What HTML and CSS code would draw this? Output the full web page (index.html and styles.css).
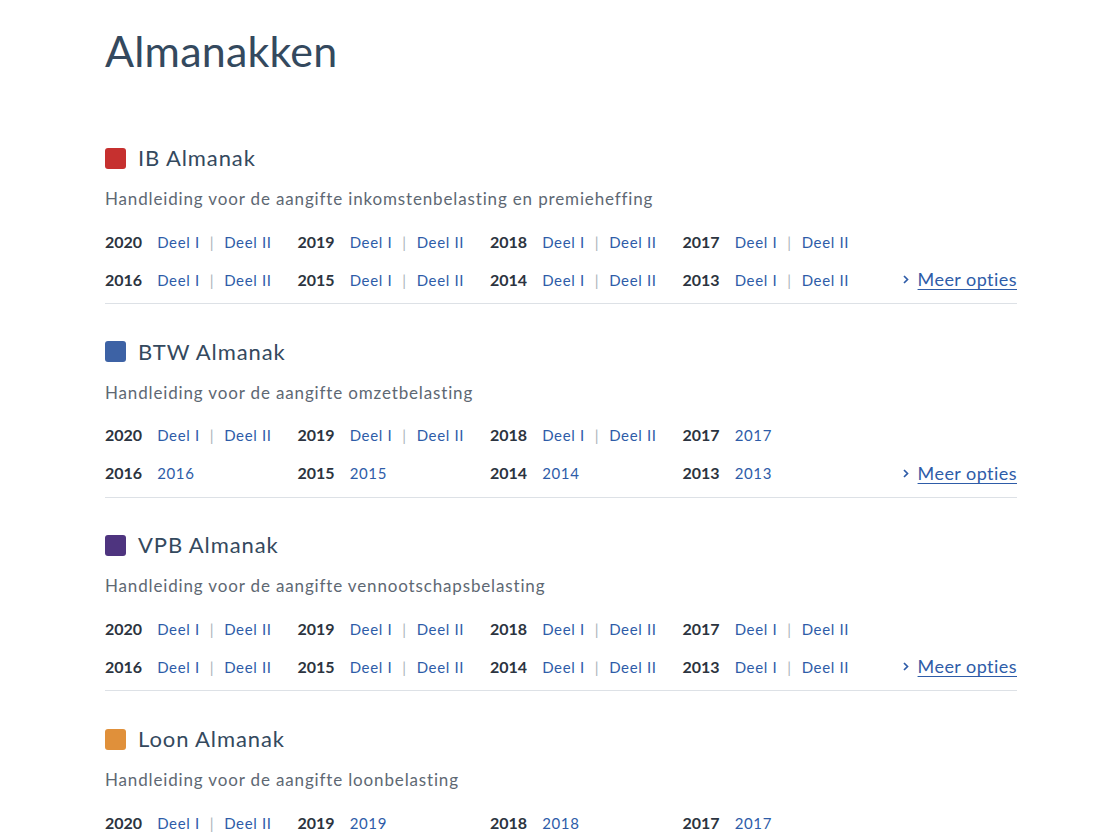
FILE: index.html
```html
<!DOCTYPE html>
<html lang="nl">
<head>
<meta charset="utf-8">
<title>Almanakken</title>
<link rel="stylesheet" href="styles.css">
</head>
<body>
<main class="page">
  <h1 class="page-title">Almanakken</h1>

  <section class="almanak">
    <h2 class="almanak-title"><span class="swatch swatch-red"></span>IB Almanak</h2>
    <p class="almanak-desc">Handleiding voor de aangifte inkomstenbelasting en premieheffing</p>
    <div class="years">
      <div class="year"><span class="y">2020</span><a href="#">Deel I</a><span class="sep">|</span><a href="#">Deel II</a></div>
      <div class="year"><span class="y">2019</span><a href="#">Deel I</a><span class="sep">|</span><a href="#">Deel II</a></div>
      <div class="year"><span class="y">2018</span><a href="#">Deel I</a><span class="sep">|</span><a href="#">Deel II</a></div>
      <div class="year"><span class="y">2017</span><a href="#">Deel I</a><span class="sep">|</span><a href="#">Deel II</a></div>
      <div class="more-cell"></div>
      <div class="year"><span class="y">2016</span><a href="#">Deel I</a><span class="sep">|</span><a href="#">Deel II</a></div>
      <div class="year"><span class="y">2015</span><a href="#">Deel I</a><span class="sep">|</span><a href="#">Deel II</a></div>
      <div class="year"><span class="y">2014</span><a href="#">Deel I</a><span class="sep">|</span><a href="#">Deel II</a></div>
      <div class="year"><span class="y">2013</span><a href="#">Deel I</a><span class="sep">|</span><a href="#">Deel II</a></div>
      <div class="more-cell"><a class="more" href="#"><svg class="chev" width="6" height="9" viewBox="0 0 6 9"><path d="M1 1 L4.5 4.5 L1 8" fill="none" stroke="currentColor" stroke-width="1.7"/></svg><span class="more-text">Meer opties</span></a></div>
    </div>
  </section>

  <section class="almanak">
    <h2 class="almanak-title"><span class="swatch swatch-blue"></span>BTW Almanak</h2>
    <p class="almanak-desc">Handleiding voor de aangifte omzetbelasting</p>
    <div class="years">
      <div class="year"><span class="y">2020</span><a href="#">Deel I</a><span class="sep">|</span><a href="#">Deel II</a></div>
      <div class="year"><span class="y">2019</span><a href="#">Deel I</a><span class="sep">|</span><a href="#">Deel II</a></div>
      <div class="year"><span class="y">2018</span><a href="#">Deel I</a><span class="sep">|</span><a href="#">Deel II</a></div>
      <div class="year"><span class="y">2017</span><a href="#">2017</a></div>
      <div class="more-cell"></div>
      <div class="year"><span class="y">2016</span><a href="#">2016</a></div>
      <div class="year"><span class="y">2015</span><a href="#">2015</a></div>
      <div class="year"><span class="y">2014</span><a href="#">2014</a></div>
      <div class="year"><span class="y">2013</span><a href="#">2013</a></div>
      <div class="more-cell"><a class="more" href="#"><svg class="chev" width="6" height="9" viewBox="0 0 6 9"><path d="M1 1 L4.5 4.5 L1 8" fill="none" stroke="currentColor" stroke-width="1.7"/></svg><span class="more-text">Meer opties</span></a></div>
    </div>
  </section>

  <section class="almanak">
    <h2 class="almanak-title"><span class="swatch swatch-purple"></span>VPB Almanak</h2>
    <p class="almanak-desc">Handleiding voor de aangifte vennootschapsbelasting</p>
    <div class="years">
      <div class="year"><span class="y">2020</span><a href="#">Deel I</a><span class="sep">|</span><a href="#">Deel II</a></div>
      <div class="year"><span class="y">2019</span><a href="#">Deel I</a><span class="sep">|</span><a href="#">Deel II</a></div>
      <div class="year"><span class="y">2018</span><a href="#">Deel I</a><span class="sep">|</span><a href="#">Deel II</a></div>
      <div class="year"><span class="y">2017</span><a href="#">Deel I</a><span class="sep">|</span><a href="#">Deel II</a></div>
      <div class="more-cell"></div>
      <div class="year"><span class="y">2016</span><a href="#">Deel I</a><span class="sep">|</span><a href="#">Deel II</a></div>
      <div class="year"><span class="y">2015</span><a href="#">Deel I</a><span class="sep">|</span><a href="#">Deel II</a></div>
      <div class="year"><span class="y">2014</span><a href="#">Deel I</a><span class="sep">|</span><a href="#">Deel II</a></div>
      <div class="year"><span class="y">2013</span><a href="#">Deel I</a><span class="sep">|</span><a href="#">Deel II</a></div>
      <div class="more-cell"><a class="more" href="#"><svg class="chev" width="6" height="9" viewBox="0 0 6 9"><path d="M1 1 L4.5 4.5 L1 8" fill="none" stroke="currentColor" stroke-width="1.7"/></svg><span class="more-text">Meer opties</span></a></div>
    </div>
  </section>

  <section class="almanak">
    <h2 class="almanak-title"><span class="swatch swatch-orange"></span>Loon Almanak</h2>
    <p class="almanak-desc">Handleiding voor de aangifte loonbelasting</p>
    <div class="years">
      <div class="year"><span class="y">2020</span><a href="#">Deel I</a><span class="sep">|</span><a href="#">Deel II</a></div>
      <div class="year"><span class="y">2019</span><a href="#">2019</a></div>
      <div class="year"><span class="y">2018</span><a href="#">2018</a></div>
      <div class="year"><span class="y">2017</span><a href="#">2017</a></div>
      <div class="more-cell"></div>
    </div>
  </section>
</main>
</body>
</html>
```

FILE: styles.css
```css
* { box-sizing: border-box; }
html, body { margin: 0; padding: 0; background: #ffffff; }
body {
  font-family: Lato, "Open Sans", "Liberation Sans", sans-serif;
  color: #2c3440;
}
.page {
  width: 912px;
  margin: 0 0 0 105px;
  padding-top: 24px;
}
.page-title {
  margin: 0 0 66px;
  font-size: 43px;
  font-weight: 400;
  line-height: 54px;
  color: #34495e;
  letter-spacing: 0.2px;
}
.almanak {
  border-bottom: 1px solid #dde1e6;
  padding-bottom: 5px;
  margin-bottom: 33.7px;
}
.almanak-title {
  display: flex;
  align-items: center;
  gap: 12px;
  margin: 0;
  font-size: 22px;
  font-weight: 400;
  line-height: 28px;
  color: #34495e;
  letter-spacing: 0.9px;
}
.swatch {
  display: inline-block;
  width: 21px;
  height: 21px;
  border-radius: 3px;
}
.swatch-red { background: #c6302f; }
.swatch-blue { background: #3d62a5; }
.swatch-purple { background: #4e347f; }
.swatch-orange { background: #e0903a; }
.almanak-desc {
  margin: 15px 0 11px;
  font-size: 17px;
  line-height: 24px;
  color: #5e6873;
  letter-spacing: 0.85px;
}
.years {
  display: grid;
  grid-template-columns: repeat(4, 192.5px) 1fr;
  grid-auto-rows: 38px;
  align-items: center;
}
.year {
  display: flex;
  align-items: baseline;
  font-size: 15px;
  letter-spacing: 0.65px;
}
.y {
  font-weight: 700;
  font-size: 16px;
  color: #2c3440;
  margin-right: 15px;
  letter-spacing: 0;
}
.year a {
  color: #2e5ca8;
  text-decoration: none;
}
.sep {
  color: #aab2ba;
  margin: 0 10px;
}
.more-cell {
  display: flex;
  justify-content: flex-end;
}
.more {
  display: flex;
  align-items: center;
  gap: 9px;
  color: #2e5ca8;
  text-decoration: none;
  font-size: 18px;
  letter-spacing: 0.45px;
}
.chev { display: block; margin-top: 1px; }
.more-text { text-decoration: underline; text-underline-offset: 3px; text-decoration-thickness: 1px; }
```
